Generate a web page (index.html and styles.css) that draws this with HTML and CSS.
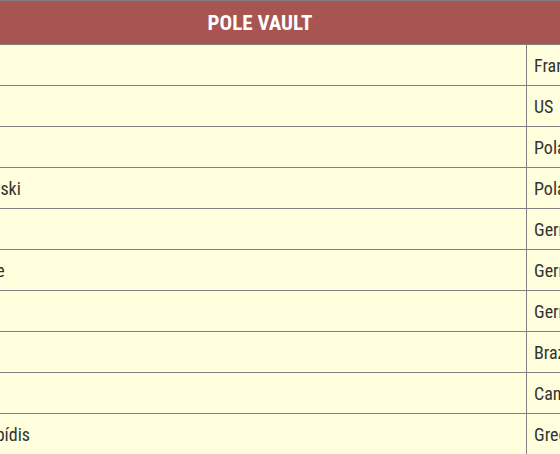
FILE: index.html
```html
<!DOCTYPE html>
<html>
<head>
<meta charset="utf-8">
<link rel="stylesheet" href="styles.css">
</head>
<body>
<div class="viewport">
<table class="results">
  <thead>
    <tr><th colspan="3" class="title">POLE VAULT</th></tr>
  </thead>
  <tbody>
    <tr><td class="name">Renaud Lavillenie</td><td class="country">France</td><td class="mark">6.05</td></tr>
    <tr><td class="name">Sam Kendricks</td><td class="country">US</td><td class="mark">5.95</td></tr>
    <tr><td class="name">Piotr Lisek</td><td class="country">Poland</td><td class="mark">5.89</td></tr>
    <tr><td class="name">Paweł Wojciechowski</td><td class="country">Poland</td><td class="mark">5.89</td></tr>
    <tr><td class="name">Torben Blech</td><td class="country">Germany</td><td class="mark">5.80</td></tr>
    <tr><td class="name">Raphael Holzdeppe</td><td class="country">Germany</td><td class="mark">5.75</td></tr>
    <tr><td class="name">Karsten Dilla</td><td class="country">Germany</td><td class="mark">5.75</td></tr>
    <tr><td class="name">Thiago Braz</td><td class="country">Brazil</td><td class="mark">5.70</td></tr>
    <tr><td class="name">Shawn Barber</td><td class="country">Canada</td><td class="mark">5.70</td></tr>
    <tr><td class="name">Konstantinos Filippídis</td><td class="country">Greece</td><td class="mark">5.65</td></tr>
  </tbody>
</table>
</div>
</body>
</html>
```
FILE: styles.css
```css
html, body {
  margin: 0;
  padding: 0;
  background: #ffffdd;
}
.viewport {
  width: 560px;
  height: 454px;
  overflow: hidden;
}
.results {
  border-collapse: collapse;
  margin-left: -140px;
  width: 800px;
  font-family: "Roboto Condensed", "Liberation Sans Narrow", "Roboto", sans-serif;
  color: #333333;
  background: #ffffdd;
}
.results th, .results td {
  border: 1px solid #808080;
}
.title {
  height: 43px;
  padding: 0;
  background: #a85452;
  color: #ffffff;
  font-size: 21px;
  font-weight: bold;
  text-align: center;
}
.results td {
  height: 40px;
  padding: 0 7px;
  font-size: 18px;
  text-align: left;
}
.name {
  width: 651px;
}
.country {
  width: 60px;
}
```
